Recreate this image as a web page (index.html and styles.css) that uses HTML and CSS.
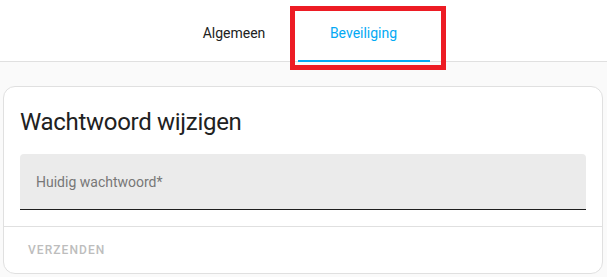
FILE: index.html
```html
<!DOCTYPE html>
<html lang="nl">
<head>
<meta charset="utf-8">
<link rel="stylesheet" href="styles.css">
</head>
<body>
<header class="tabbar">
  <nav class="tabs">
    <div class="tab tab-algemeen">Algemeen</div>
    <div class="tab tab-active">Beveiliging</div>
  </nav>
  <div class="highlight"></div>
</header>
<main class="content">
  <section class="card">
    <h1 class="card-title">Wachtwoord wijzigen</h1>
    <div class="field">
      <span class="field-label">Huidig wachtwoord*</span>
    </div>
    <div class="card-actions">
      <button class="btn" disabled>Verzenden</button>
    </div>
  </section>
</main>
</body>
</html>
```

FILE: styles.css
```css
html, body {
  margin: 0;
  padding: 0;
  background: #fafafa;
  font-family: Roboto, "Liberation Sans", Arial, sans-serif;
  color: #212121;
}

.tabbar {
  position: relative;
  background: #ffffff;
  border-bottom: 1px solid #e0e0e0;
  height: 61px;
}

.tabs {
  display: flex;
  justify-content: center;
  padding-right: 7px;
  height: 62px;
}

.tab {
  box-sizing: border-box;
  height: 62px;
  display: flex;
  align-items: center;
  justify-content: center;
  padding-top: 3px;
  font-size: 14px;
  color: #212121;
}

.tab-algemeen {
  width: 127px;
}

.tab-active {
  width: 132px;
  color: #03a9f4;
  border-bottom: 2px solid #03a9f4;
  padding-top: 5px;
}

.highlight {
  position: absolute;
  left: 290px;
  top: 6px;
  width: 156px;
  height: 64px;
  box-sizing: border-box;
  border: 5px solid #ed1c24;
}

.content {
  padding-top: 24px;
}

.card {
  box-sizing: border-box;
  width: 600px;
  margin: 0 0 0 3px;
  background: #ffffff;
  border: 1px solid #e0e0e0;
  border-radius: 12px;
}

.card-title {
  margin: 0;
  padding: 19px 16px 16px;
  font-size: 24px;
  line-height: 32px;
  font-weight: 400;
  letter-spacing: -0.3px;
  color: #212121;
}

.field {
  box-sizing: border-box;
  margin: 0 16px 16px;
  height: 56px;
  background: #ebebeb;
  border-radius: 4px 4px 0 0;
  border-bottom: 1px solid #1e1e1e;
  display: flex;
  align-items: center;
  padding: 0 16px;
}

.field-label {
  font-size: 14px;
  color: #777777;
}

.card-actions {
  box-sizing: border-box;
  border-top: 1px solid #e0e0e0;
  height: 47px;
  display: flex;
  align-items: center;
  padding: 0 16px;
}

.btn {
  background: none;
  border: none;
  padding: 0 8px;
  height: 36px;
  font-family: inherit;
  font-size: 12px;
  font-weight: 500;
  letter-spacing: 1.07px;
  text-transform: uppercase;
  color: #bdbdbd;
}
```
